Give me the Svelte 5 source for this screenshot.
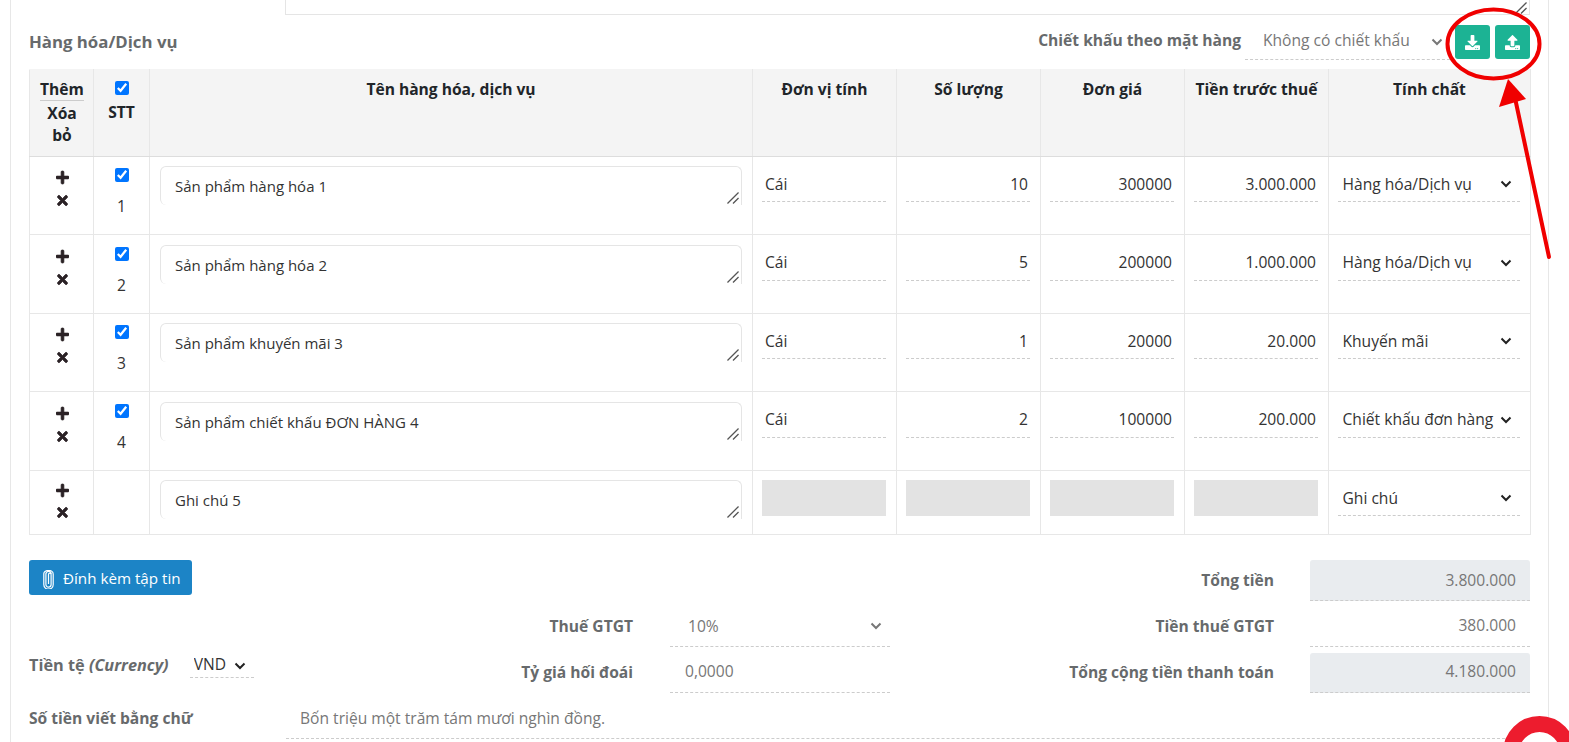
<script>
  const plus = "M416 208H272V64c0-17.67-14.33-32-32-32h-32c-17.67 0-32 14.33-32 32v144H32c-17.67 0-32 14.33-32 32v32c0 17.67 14.33 32 32 32h144v144c0 17.67 14.33 32 32 32h32c17.67 0 32-14.33 32-32V304h144c17.67 0 32-14.33 32-32v-32c0-17.67-14.33-32-32-32z";
  const times = "M242.72 256l100.07-100.07c12.28-12.28 12.28-32.19 0-44.48l-22.24-22.24c-12.28-12.28-32.19-12.28-44.48 0L176 189.28 75.93 89.21c-12.28-12.28-32.19-12.28-44.48 0L9.21 111.45c-12.28 12.28-12.28 32.19 0 44.48L109.28 256 9.21 356.07c-12.28 12.28-12.28 32.19 0 44.48l22.24 22.24c12.28 12.28 32.2 12.28 44.48 0L176 322.72l100.07 100.07c12.28 12.28 32.2 12.28 44.48 0l22.24-22.24c12.28-12.28 12.28-32.19 0-44.48L242.72 256z";

  const rows = [
    { stt: 1, name: "Sản phẩm hàng hóa 1", unit: "Cái", qty: "10", price: "300000", amount: "3.000.000", kind: "Hàng hóa/Dịch vụ" },
    { stt: 2, name: "Sản phẩm hàng hóa 2", unit: "Cái", qty: "5", price: "200000", amount: "1.000.000", kind: "Hàng hóa/Dịch vụ" },
    { stt: 3, name: "Sản phẩm khuyến mãi 3", unit: "Cái", qty: "1", price: "20000", amount: "20.000", kind: "Khuyến mãi" },
    { stt: 4, name: "Sản phẩm chiết khấu ĐƠN HÀNG 4", unit: "Cái", qty: "2", price: "100000", amount: "200.000", kind: "Chiết khấu đơn hàng" },
    { name: "Ghi chú 5", kind: "Ghi chú", note: true }
  ];
</script>

{#snippet chevron(cls)}
  <svg class="chevron {cls}" viewBox="0 0 12 8"><path d="M1.5 1.5 6 6l4.5-4.5" fill="none" stroke="currentColor" stroke-width="2" /></svg>
{/snippet}

{#snippet grip()}
  <svg class="grip" viewBox="0 0 13 13"><path d="M.5 12.5 12.5.5M6.5 12.5l6-6" fill="none" stroke="#555" stroke-width="1.4" /></svg>
{/snippet}

<div class="panel">
  <div class="top">
    <div class="remark-wrap">
      <textarea class="remark"></textarea>
      {@render grip()}
    </div>
  </div>

  <div class="title-row">
    <h3>Hàng hóa/Dịch vụ</h3>
    <div class="tools">
      <span class="tool-label">Chiết khấu theo mặt hàng</span>
      <div class="select-box discount">
        <select><option>Không có chiết khấu</option></select>
        {@render chevron("muted")}
      </div>
      <button class="btn-green" aria-label="Tải xuống">
        <svg viewBox="0 0 512 512"><path d="M216 0h80c13.3 0 24 10.7 24 24v168h87.7c17.8 0 26.7 21.5 14.1 34.1L269.7 378.3c-7.5 7.5-19.8 7.5-27.3 0L90.1 226.1c-12.6-12.6-3.7-34.1 14.1-34.1H192V24c0-13.3 10.7-24 24-24zm296 376v112c0 13.3-10.7 24-24 24H24c-13.3 0-24-10.7-24-24V376c0-13.3 10.7-24 24-24h146.7l49 49c20.1 20.1 52.5 20.1 72.6 0l49-49H488c13.3 0 24 10.7 24 24zm-124 88c0-11-9-20-20-20s-20 9-20 20 9 20 20 20 20-9 20-20zm64 0c0-11-9-20-20-20s-20 9-20 20 9 20 20 20 20-9 20-20z" /></svg>
      </button>
      <button class="btn-green" aria-label="Tải lên">
        <svg viewBox="0 0 512 512"><path d="M296 384h-80c-13.3 0-24-10.7-24-24V192h-87.7c-17.8 0-26.7-21.5-14.1-34.1L242.3 5.7c7.5-7.5 19.8-7.5 27.3 0l152.2 152.2c12.6 12.6 3.7 34.1-14.1 34.1H320v168c0 13.3-10.7 24-24 24zm216-8v112c0 13.3-10.7 24-24 24H24c-13.3 0-24-10.7-24-24V376c0-13.3 10.7-24 24-24h136v8c0 30.9 25.1 56 56 56h80c30.9 0 56-25.1 56-56v-8h136c13.3 0 24 10.7 24 24zm-124 88c0-11-9-20-20-20s-20 9-20 20 9 20 20 20 20-9 20-20zm64 0c0-11-9-20-20-20s-20 9-20 20 9 20 20 20 20-9 20-20z" /></svg>
      </button>
    </div>
  </div>

  <table>
    <colgroup>
      <col style="width:64px" /><col style="width:56px" /><col style="width:603px" /><col style="width:144px" />
      <col style="width:144px" /><col style="width:144px" /><col style="width:144px" /><col style="width:202px" />
    </colgroup>
    <thead>
      <tr>
        <th class="add-cell"><span class="add-head">Thêm</span><span class="del-head">Xóa bỏ</span></th>
        <th><input type="checkbox" checked /><span class="stt-head">STT</span></th>
        <th>Tên hàng hóa, dịch vụ</th>
        <th>Đơn vị tính</th>
        <th>Số lượng</th>
        <th>Đơn giá</th>
        <th>Tiền trước thuế</th>
        <th>Tính chất</th>
      </tr>
    </thead>
    <tbody>
      {#each rows as row}
        <tr class:note={row.note}>
          <td class="actions">
            <svg class="plus" viewBox="0 0 448 512"><path d={plus} /></svg>
            <svg class="times" viewBox="0 0 352 512"><path d={times} /></svg>
          </td>
          <td class="stt">
            {#if !row.note}
              <input type="checkbox" checked />
              <span>{row.stt}</span>
            {/if}
          </td>
          <td class="name">
            <div class="name-wrap">
              <textarea value={row.name}></textarea>
              {@render grip()}
            </div>
          </td>
          {#if row.note}
            <td class="field"><div class="blank"></div></td>
            <td class="field"><div class="blank"></div></td>
            <td class="field"><div class="blank"></div></td>
            <td class="field"><div class="blank"></div></td>
          {:else}
            <td class="field"><input class="line" value={row.unit} /></td>
            <td class="field"><input class="line right" value={row.qty} /></td>
            <td class="field"><input class="line right" value={row.price} /></td>
            <td class="field"><input class="line right" value={row.amount} /></td>
          {/if}
          <td class="field kind">
            <div class="select-box">
              <select><option>{row.kind}</option></select>
              {@render chevron("dark")}
            </div>
          </td>
        </tr>
      {/each}
    </tbody>
  </table>

  <div class="summary">
    <button class="btn-attach">
      <svg viewBox="0 0 11 19"><path d="M5.5 14V4.5a1.3 1.3 0 0 1 2.6 0v10a2.6 2.6 0 0 1-5.2 0V4a2.6 2.6 0 0 1 0-.3" fill="none" stroke="currentColor" stroke-width="1.2" /><path d="M2.9 4a2.6 2.6 0 0 1 5.2 0M.8 5v9.5a4.7 4.7 0 0 0 9.4 0V3.6" fill="none" stroke="currentColor" stroke-width="1.2" /><path d="M.8 5V4a4.7 3.4 0 0 1 9.4-.4" fill="none" stroke="currentColor" stroke-width="1.2" /></svg>
      Đính kèm tập tin
    </button>
    <span></span><span></span>
    <label class="label first" for="total">Tổng tiền</label>
    <input id="total" class="amount filled first" value="3.800.000" readonly />

    <span></span>
    <label class="label" for="vat">Thuế GTGT</label>
    <div class="select-box vat">
      <select id="vat"><option>10%</option></select>
      {@render chevron("muted")}
    </div>
    <label class="label" for="vat-money">Tiền thuế GTGT</label>
    <input id="vat-money" class="amount" value="380.000" readonly />

    <div class="currency">
      <span class="label">Tiền tệ <em>(Currency)</em></span>
      <div class="select-box vnd">
        <select><option>VND</option></select>
        {@render chevron("dark")}
      </div>
    </div>
    <label class="label" for="rate">Tỷ giá hối đoái</label>
    <input id="rate" class="rate" value="0,0000" />
    <label class="label" for="grand">Tổng cộng tiền thanh toán</label>
    <input id="grand" class="amount filled" value="4.180.000" readonly />
  </div>

  <div class="words">
    <label class="label" for="words">Số tiền viết bằng chữ</label>
    <input id="words" value="Bốn triệu một trăm tám mươi nghìn đồng." />
  </div>
</div>

<svg class="callout" viewBox="0 0 1569 742">
  <ellipse cx="1493.5" cy="44" rx="46" ry="34.5" fill="none" stroke="#f00000" stroke-width="4" />
  <path d="M1549 257 1515 98" fill="none" stroke="#f00000" stroke-width="4" stroke-linecap="round" />
  <path d="M1508 79 1499 107 1526 99z" fill="#f00000" />
</svg>

<div class="chat"></div>

<style>
  :global(body) {
    margin: 0;
    overflow: hidden;
    background: #fff;
  }

  .panel {
    box-sizing: border-box;
    height: 742px;
    width: 1539px;
    margin-left: 10px;
    padding: 0 18px 0 18px;
    border-left: 1px solid #e7e7e7;
    border-right: 1px solid #e7e7e7;
    font-family: "Open Sans", sans-serif;
    font-size: 15.6px;
    color: #333;
    overflow: hidden;
  }

  .top {
    display: flex;
    justify-content: flex-end;
    height: 15px;
  }

  .remark-wrap {
    position: relative;
    flex: none;
    width: 1245px;
    height: 15px;
  }

  .remark {
    box-sizing: border-box;
    display: block;
    width: 100%;
    height: 35px;
    margin-top: -20px;
    border: 1px solid #e5e5e5;
    outline: none;
    resize: none;
  }

  .grip {
    position: absolute;
    right: 3px;
    bottom: 1px;
    width: 12px;
    height: 12px;
    pointer-events: none;
  }

  .title-row {
    display: flex;
    justify-content: space-between;
    height: 54px;
  }

  h3 {
    margin: 16px 0 0;
    font-size: 16.8px;
    line-height: 22px;
    font-weight: 700;
    color: #676a6c;
  }

  .tools {
    display: flex;
    align-items: flex-start;
    padding-top: 10px;
  }

  .tool-label {
    font-weight: 700;
    font-size: 15.6px;
    line-height: 30px;
    color: #676a6c;
    margin-right: 4px;
  }

  .select-box {
    position: relative;
  }

  .select-box select {
    appearance: none;
    display: block;
    box-sizing: border-box;
    width: 100%;
    background: transparent;
    border: 0;
    border-bottom: 1px dashed #ccc;
    border-radius: 0;
    outline: none;
    font: inherit;
    color: #333;
  }

  .chevron {
    position: absolute;
    width: 12px;
    height: 8px;
    pointer-events: none;
  }

  .chevron.muted {
    color: #777;
  }

  .chevron.dark {
    color: #222;
  }

  .discount {
    width: 205px;
    height: 35px;
  }

  .discount select {
    height: 35px;
    padding: 0 0 4px 18px;
    color: #777;
  }

  .discount .chevron {
    right: 7px;
    top: 13px;
  }

  .btn-green {
    width: 35px;
    height: 34px;
    margin-left: 5px;
    padding: 0;
    border: 0;
    border-radius: 3px;
    background: #1cb394;
    display: flex;
    align-items: center;
    justify-content: center;
    flex: none;
  }

  .btn-green svg {
    width: 15px;
    height: 15px;
    fill: #fff;
  }

  table {
    table-layout: fixed;
    width: 1501px;
    border-collapse: collapse;
  }

  th {
    height: 87px;
    padding: 8px 4px 0;
    box-sizing: border-box;
    background: #f4f4f4;
    border: 1px solid #e7e7e7;
    border-bottom-color: #ddd;
    border-top-color: #f4f4f4;
    vertical-align: top;
    text-align: center;
    font-size: 15.6px;
    line-height: 22px;
    font-weight: 700;
    color: #212529;
  }

  th.add-cell {
    padding-left: 10px;
    padding-right: 9px;
  }

  .add-head {
    display: block;
    border-bottom: 1px solid #ccc;
  }

  .del-head {
    display: block;
    margin-top: 1px;
  }

  th input[type="checkbox"] {
    margin: 3px auto 0;
  }

  .stt-head {
    display: block;
    margin-top: 6px;
  }

  input[type="checkbox"] {
    display: block;
    width: 14px;
    height: 14px;
    margin: 0 auto;
  }

  td {
    height: 78px;
    box-sizing: border-box;
    border: 1px solid #e7e7e7;
    padding: 0;
    vertical-align: top;
  }

  tr:nth-child(even) td {
    height: 79px;
  }

  tr.note td {
    height: 64px;
  }

  .actions {
    text-align: center;
    padding: 12.5px 0 0 1px;
  }

  tr:nth-child(even) .actions {
    padding-top: 14px;
  }

  tr.note .actions {
    padding-top: 12px;
  }

  .actions svg {
    display: block;
    margin: 0 auto;
    fill: #2b2226;
    stroke: #2b2226;
    stroke-width: 24;
  }

  .plus {
    width: 13px;
    height: 15px;
  }

  .times {
    width: 11px;
    height: 15px;
    margin-top: 8px !important;
  }

  tr.note .times {
    margin-top: 7px !important;
  }

  .stt {
    padding-top: 11px;
    text-align: center;
    color: #333;
  }

  tr:nth-child(even) .stt {
    padding-top: 12px;
  }

  .stt span {
    display: block;
    margin-top: 14px;
    line-height: 20px;
  }

  .name {
    padding: 9px 10px;
  }

  tr:nth-child(even) .name,
  tr:nth-child(even) .field {
    padding-top: 10px;
  }

  .name-wrap {
    position: relative;
    height: 39px;
  }

  .name textarea {
    display: block;
    box-sizing: border-box;
    width: 100%;
    height: 39px;
    padding: 9px 14px;
    border: 1px solid #e5e5e5;
    border-bottom: 0;
    border-radius: 6px 6px 0 6px;
    outline: none;
    resize: none;
    font: inherit;
    font-size: 15px;
    line-height: 20px;
    color: #333;
  }

  .field {
    padding: 9px 10px 0 9px;
  }

  .line {
    display: block;
    box-sizing: border-box;
    width: 100%;
    height: 36px;
    padding: 0 2px 0 3px;
    border: 0;
    border-bottom: 1px dashed #ccc;
    outline: none;
    font: inherit;
    color: #333;
  }

  tr:nth-child(even) .line {
    padding-bottom: 2px;
  }

  .right {
    text-align: right;
  }

  .blank {
    height: 36px;
    background: #e3e3e3;
  }

  .kind select {
    height: 36px;
    padding: 0 4px 0 4.5px;
    color: #333;
  }

  tr:nth-child(even) .kind select {
    padding-bottom: 2px;
  }

  .kind .chevron {
    right: 8px;
    top: 14px;
  }

  .summary {
    display: grid;
    grid-template-columns: 240px 364px 257px 384px 256px;
    grid-template-rows: 40.5px 40px 40px;
    row-gap: 6px;
    margin-top: 25px;
  }

  .btn-attach {
    justify-self: start;
    display: flex;
    align-items: center;
    gap: 9px;
    height: 35px;
    width: 163px;
    padding: 0 0 0 14px;
    border: 0;
    border-radius: 3px;
    background: #1c84c6;
    color: #fff;
    font: inherit;
    font-size: 15.2px;
  }

  .btn-attach svg {
    width: 11px;
    height: 19px;
    flex: none;
    margin-top: 3px;
  }

  .label {
    font-weight: 700;
    color: #676a6c;
    text-align: right;
    align-self: center;
    padding-bottom: 2px;
  }

  .label.first {
    padding-bottom: 0;
  }

  .amount,
  .rate {
    box-sizing: border-box;
    justify-self: end;
    width: 220px;
    height: 40px;
    border: 0;
    border-bottom: 1px dashed #ccc;
    outline: none;
    font: inherit;
    color: #777;
    background: transparent;
  }

  .amount {
    text-align: right;
    padding: 0 14px 2px 0;
    border-radius: 3px 3px 0 0;
  }

  .amount.first {
    height: 40.5px;
    padding-bottom: 0;
  }

  .amount.filled {
    background: #e9ecef;
  }

  .rate {
    padding: 0 0 2px 15px;
  }

  .vat {
    justify-self: end;
    width: 220px;
    height: 40px;
  }

  .vat select {
    height: 40px;
    padding: 0 0 0 18px;
    color: #777;
  }

  .vat .chevron {
    right: 8px;
    top: 15px;
  }

  .currency {
    display: flex;
    align-items: flex-start;
  }

  .currency .label {
    align-self: flex-start;
    font-size: 16.3px;
    line-height: 24px;
    padding: 0;
  }

  .currency em {
    font-style: italic;
  }

  .vnd {
    width: 64px;
    height: 25px;
    margin-left: 21px;
  }

  .vnd select {
    height: 25px;
    padding: 0 0 2px 4px;
  }

  .vnd .chevron {
    right: 8px;
    top: 9px;
  }

  .words {
    display: flex;
    margin-top: 7px;
    align-items: flex-start;
  }

  .words .label {
    width: 257px;
    flex: none;
    text-align: left;
    line-height: 35px;
  }

  .words input {
    flex: 1;
    box-sizing: border-box;
    height: 39px;
    padding: 0 14px 2px;
    border: 0;
    border-bottom: 1px dashed #ccc;
    outline: none;
    font: inherit;
    color: #777;
  }

  .callout {
    position: fixed;
    inset: 0;
    width: 1569px;
    height: 742px;
    pointer-events: none;
  }

  .chat {
    position: fixed;
    left: 1502.5px;
    top: 715.5px;
    box-sizing: border-box;
    width: 73px;
    height: 73px;
    border: 16px solid #ed1c2e;
    border-radius: 50%;
    background: #fff;
  }
</style>
